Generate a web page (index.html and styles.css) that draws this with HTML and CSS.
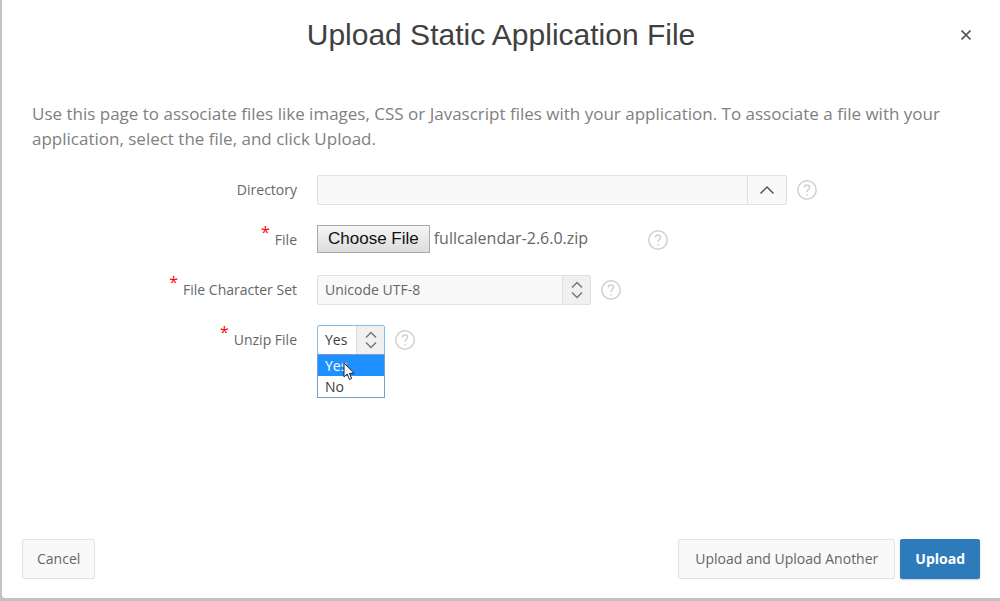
FILE: index.html
```
<!doctype html>
<html lang="en">
<head>
  <meta charset="UTF-8" />
  <meta name="viewport" content="width=device-width, initial-scale=1.0" />
  <title>Upload Static Application File</title>
  <link rel="stylesheet" href="styles.css">
</head>
<body>

<svg class="sprite" width="0" height="0" aria-hidden="true">
  <symbol id="icon-help" viewBox="0 0 20 20">
    <circle cx="10" cy="10" r="9.2" />
    <path d="M7.4 7.6c0-1.7 1.1-2.6 2.6-2.6s2.6.9 2.6 2.3c0 1.9-2.5 2.1-2.5 4.6M10.1 14v1.6" />
  </symbol>
  <symbol id="icon-updown" viewBox="0 0 12 18">
    <path d="M1 6.5l5-5 5 5M1 11.5l5 5 5-5" />
  </symbol>
</svg>

<form class="dialog">
  <header class="dialog-header">
    <h1 class="dialog-title">Upload Static Application File</h1>
    <button type="button" class="close" aria-label="Close">
      <svg width="10" height="10" viewBox="0 0 10 10"><path d="M0.5 0.5l9 9M9.5 0.5l-9 9" /></svg>
    </button>
  </header>

  <p class="intro">Use this page to associate files like images, CSS or Javascript files with your application. To associate a file with your application, select the file, and click Upload.</p>

  <div class="fields">
    <!-- Directory -->
    <label class="label" for="directory">Directory</label>
    <div class="field">
      <div class="combo">
        <input type="text" class="combo-input" id="directory" />
        <button type="button" class="combo-button" aria-label="Show directories">
          <svg width="16" height="10" viewBox="0 0 16 10"><path d="M1.5 8.5l6.5-6.5 6.5 6.5" /></svg>
        </button>
      </div>
      <button type="button" class="help" aria-label="Help: Directory"><svg><use href="#icon-help" /></svg></button>
    </div>

    <!-- File -->
    <label class="label" for="file"><span class="required">*</span>File</label>
    <div class="field">
      <input type="file" class="file" id="file" />
      <button type="button" class="help" aria-label="Help: File"><svg><use href="#icon-help" /></svg></button>
    </div>

    <!-- File Character Set -->
    <label class="label" for="charset"><span class="required">*</span>File Character Set</label>
    <div class="field">
      <div class="select select-charset">
        <select id="charset">
          <option>Unicode UTF-8</option>
        </select>
        <span class="select-arrows"><svg><use href="#icon-updown" /></svg></span>
      </div>
      <button type="button" class="help" aria-label="Help: File Character Set"><svg><use href="#icon-help" /></svg></button>
    </div>

    <!-- Unzip File -->
    <label class="label" for="unzip"><span class="required">*</span>Unzip File</label>
    <div class="field">
      <div class="select select-unzip is-open">
        <select id="unzip">
          <option selected>Yes</option>
          <option>No</option>
        </select>
        <span class="select-arrows"><svg><use href="#icon-updown" /></svg></span>
        <ul class="menu" role="listbox">
          <li class="menu-item is-active" role="option" aria-selected="true">Yes</li>
          <li class="menu-item" role="option">No</li>
        </ul>
        <svg class="pointer" width="12" height="19" viewBox="0 0 12 19">
          <path d="M1 1v14l3.2-3 2.3 5.5 2.2-1-2.3-5.2H11z" />
        </svg>
      </div>
      <button type="button" class="help" aria-label="Help: Unzip File"><svg><use href="#icon-help" /></svg></button>
    </div>
  </div>

  <footer class="dialog-footer">
    <button type="button" class="button">Cancel</button>
    <button type="button" class="button button-another">Upload and Upload Another</button>
    <button type="submit" class="button button-primary">Upload</button>
  </footer>
</form>

<script>
  "use strict";
  // Preselect the archive
  var transfer = new DataTransfer();
  transfer.items.add(new File([""], "fullcalendar-2.6.0.zip"));
  document.getElementById("file").files = transfer.files;
</script>
</body>
</html>
```
FILE: styles.css
```
* {
  box-sizing: border-box;
}
body {
  margin: 0;
  background: #c2c2c2;
  color: #666;
  font: 14px/20px "Open Sans", "Noto Sans", sans-serif;
}
button,
input,
select {
  font: inherit;
  color: inherit;
}
svg {
  display: block;
  fill: none;
  stroke: #555;
}
.sprite {
  position: absolute;
}
.dialog {
  display: flex;
  flex-direction: column;
  min-height: calc(100vh - 3px);
  margin: 0 0 3px 2px;
  background: #fff;
  border-radius: 0 0 0 3px;
}
.dialog-header {
  display: grid;
  grid-template-columns: 40px 1fr 40px;
  align-items: center;
  height: 70px;
  padding: 0 14px;
}
.dialog-title {
  grid-column: 2;
  margin: 0;
  color: #404040;
  font: 30px/36px "Liberation Sans", Arial, sans-serif;
  text-align: center;
}
.close {
  display: flex;
  align-items: center;
  justify-content: center;
  width: 40px;
  height: 40px;
  padding: 0;
  border: 0;
  background: none;
}
.close svg {
  stroke-width: 1.6;
}
.intro {
  margin: 31px 30px 24px;
  color: #808080;
  font-size: 17px;
  line-height: 25px;
}
.fields {
  display: grid;
  grid-template-columns: 265px 1fr;
  column-gap: 20px;
  row-gap: 20px;
  padding: 0 30px;
}
.label {
  line-height: 30px;
  text-align: right;
}
.required {
  margin-right: 5px;
  color: #f00;
  font-size: 16px;
  line-height: 0;
  vertical-align: 7px;
}
.field {
  display: flex;
  align-items: center;
  gap: 10px;
  height: 30px;
}
.help {
  padding: 0;
  border: 0;
  background: none;
}
.help svg {
  width: 20px;
  height: 20px;
  stroke: #d0d0d0;
  stroke-width: 1.5;
}
.combo {
  display: flex;
  width: 470px;
  height: 30px;
  border: 1px solid #dfdfdf;
  border-radius: 2px;
  background: #f9f9f9;
}
.combo-input {
  flex: 1;
  min-width: 0;
  padding: 0 8px;
  border: 0;
  background: none;
}
.combo-button {
  display: flex;
  align-items: center;
  justify-content: center;
  width: 39px;
  padding: 0;
  border: 0;
  border-left: 1px solid #dfdfdf;
  background: none;
}
.combo-button svg {
  stroke-width: 1.5;
}
.file {
  align-self: flex-start;
  width: 321px;
  height: 28px;
  font-size: 16px;
  line-height: 24px;
}
.file::file-selector-button {
  height: 28px;
  margin: 0 4px 0 0;
  padding: 0 10px;
  border: 1px solid #a9a9a9;
  border-radius: 0;
  background: linear-gradient(#f6f6f6, #dcdcdc);
  color: #111;
  font: 17px/24px "Liberation Sans", Arial, sans-serif;
}
.select {
  position: relative;
  display: flex;
  height: 30px;
  border: 1px solid #dfdfdf;
  border-radius: 2px;
  background: #f9f9f9;
}
.select select {
  flex: 1;
  min-width: 0;
  padding: 0 7px;
  border: 0;
  outline: 0;
  background: none;
  appearance: none;
}
.select-arrows {
  display: flex;
  align-items: center;
  justify-content: center;
  width: 28px;
  border-left: 1px solid #dfdfdf;
  background: #f0f0f0;
  pointer-events: none;
}
.select-arrows svg {
  width: 12px;
  height: 18px;
  stroke: #777;
  stroke-width: 1.5;
}
.select-charset {
  width: 274px;
}
.select-unzip {
  width: 68px;
}
.select.is-open {
  border-color: #7fbdee;
  background: #fff;
  color: #404040;
}
.menu {
  position: absolute;
  top: 28px;
  left: -1px;
  right: -1px;
  margin: 0;
  padding: 0;
  border: 1px solid #7a9cd3;
  background: #fff;
  list-style: none;
}
.menu-item {
  padding: 0 7px;
  line-height: 21px;
}
.menu-item.is-active {
  background: #1e90ff;
  color: #fff;
}
.pointer {
  position: absolute;
  top: 36px;
  left: 25px;
  fill: #fff;
  stroke: #222;
}
.dialog-footer {
  display: flex;
  gap: 5px;
  margin-top: auto;
  padding: 19px 20px;
}
.button {
  height: 40px;
  padding: 0 14px;
  border: 1px solid #e2e2e2;
  border-radius: 2px;
  background: #f9f9f9;
}
.button-another {
  min-width: 217px;
  margin-left: auto;
}
.button-primary {
  border-color: #2d7bbb;
  background: #2d7bbb;
  box-shadow: 0 1px 2px rgba(0, 0, 0, 0.2);
  color: #fff;
  font-weight: bold;
}
```
